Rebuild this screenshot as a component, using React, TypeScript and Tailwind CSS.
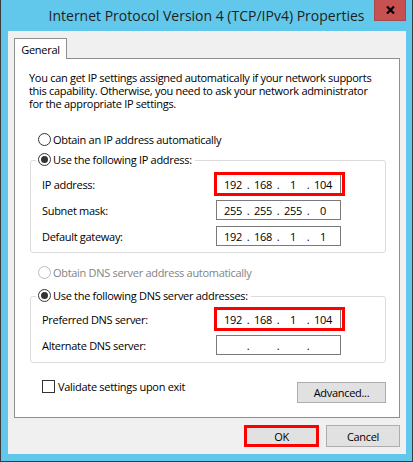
import React from 'react';

type IpProps = { parts: string[]; highlight?: boolean };

function Radio({ checked, disabled }: { checked?: boolean; disabled?: boolean }) {
  return (
    <span
      className={`w-[13px] h-[13px] rounded-full border bg-white flex items-center justify-center shrink-0 ${
        disabled ? 'border-[#bcbcbc]' : 'border-[#333333]'
      }`}
    >
      {checked && <span className="w-[7px] h-[7px] rounded-full bg-[#333333]" />}
    </span>
  );
}

function IpBox({ parts, highlight }: IpProps) {
  return (
    <div className="relative w-[125px] h-[20px] border border-[#7a7a7a] bg-white flex items-center pl-[3px]">
      {parts.map((p, i) => (
        <React.Fragment key={i}>
          {i > 0 && <span className="w-[4px] text-center">.</span>}
          <span className="w-[26px] text-center">{p}</span>
        </React.Fragment>
      ))}
      {/* red annotation frame */}
      {highlight && (
        <span className="absolute -left-[3px] -top-[3px] -right-[5px] -bottom-[3px] border-[3px] border-[#ff0000]" />
      )}
    </div>
  );
}

function IpRow({ label, parts, highlight }: IpProps & { label: string }) {
  return (
    <div className="flex items-center h-[20px]">
      <span className="w-[174px]">{label}</span>
      <IpBox parts={parts} highlight={highlight} />
    </div>
  );
}

function Legend({ text }: { text: string }) {
  return (
    <div className="-mt-[8px] -ml-[6px] w-fit bg-white pl-[2px] pr-[3px] h-[13px] flex items-center gap-[2px]">
      <Radio checked />
      <span>{text}</span>
    </div>
  );
}

export default function App() {
  return (
    <div className="w-[413px] h-[462px] bg-[#62c8eb] border-x border-b border-[#3b3b3b] flex flex-col font-['Open_Sans',sans-serif] text-[11px] leading-[13px] tracking-[-0.3px] text-black whitespace-nowrap">
      {/* Title bar */}
      <div className="relative h-[31px] flex items-center justify-center text-[14px] leading-[20px] tracking-normal text-[#1e1e1e]">
        <span>Internet Protocol Version 4 (TCP/IPv4) Properties</span>
        <button className="absolute top-0 right-[6px] w-[32px] h-[21px] bg-[#c75050] border-x border-b border-[#a84848] flex items-center justify-center">
          <svg width="9" height="8" viewBox="0 0 9 8">
            <path d="M1 0.5 L8 7.5 M8 0.5 L1 7.5" stroke="#000" strokeWidth="2.2" />
          </svg>
        </button>
      </div>

      {/* Client area */}
      <div className="flex-1 ml-[7px] mr-[6px] mb-[7px] bg-[#f0f0f0] pt-[7px] pl-[6px] flex flex-col">
        <div className="relative z-10 w-[53px] h-[21px] -mb-px bg-white border-x border-t border-[#8f8f8f] flex items-center justify-center">
          General
        </div>

        <div className="w-[386px] h-[360px] border border-[#8f8f8f] bg-white flex flex-col">
          <div className="pl-[14px] pt-[12px]">
            <div>You can get IP settings assigned automatically if your network supports</div>
            <div>this capability. Otherwise, you need to ask your network administrator</div>
            <div>for the appropriate IP settings.</div>
          </div>

          <div className="mt-[23px] pl-[23px] h-[13px] flex items-center gap-[2px]">
            <Radio />
            <span>Obtain an IP address automatically</span>
          </div>

          <div className="mt-[14px] ml-[15px] w-[356px] border border-[#dcdcdc] rounded-[3px] pl-[11px] pb-[6px]">
            <Legend text="Use the following IP address:" />
            <div className="mt-[8px] flex flex-col gap-[6px]">
              <IpRow label="IP address:" parts={['192', '168', '1', '104']} highlight />
              <IpRow label="Subnet mask:" parts={['255', '255', '255', '0']} />
              <IpRow label="Default gateway:" parts={['192', '168', '1', '1']} />
            </div>
          </div>

          <div className="mt-[13px] pl-[23px] h-[13px] flex items-center gap-[2px] text-[#838383]">
            <Radio disabled />
            <span>Obtain DNS server address automatically</span>
          </div>

          <div className="mt-[17px] ml-[15px] w-[356px] border border-[#dcdcdc] rounded-[3px] pl-[11px] pb-[7px]">
            <Legend text="Use the following DNS server addresses:" />
            <div className="mt-[7px] flex flex-col gap-[6px]">
              <IpRow label="Preferred DNS server:" parts={['192', '168', '1', '104']} highlight />
              <IpRow label="Alternate DNS server:" parts={['', '', '', '']} />
            </div>
          </div>

          <div className="mt-[17px] pl-[27px] pr-[13px] flex items-start justify-between">
            <div className="h-[13px] flex items-center gap-[3px]">
              <span className="w-[13px] h-[13px] border border-[#333333] bg-white" />
              <span>Validate settings upon exit</span>
            </div>
            <button className="mt-[2px] w-[89px] h-[21px] bg-[#e1e1e1] border border-[#adadad]">
              Advanced...
            </button>
          </div>
        </div>

        <div className="mt-[7px] w-[386px] flex justify-end gap-[7px]">
          <button className="w-[75px] h-[22px] bg-[#e1e1e1] border-[3px] border-[#ff0000]">OK</button>
          <button className="w-[74px] h-[22px] bg-[#e1e1e1] border border-[#adadad]">Cancel</button>
        </div>
      </div>
    </div>
  );
}
